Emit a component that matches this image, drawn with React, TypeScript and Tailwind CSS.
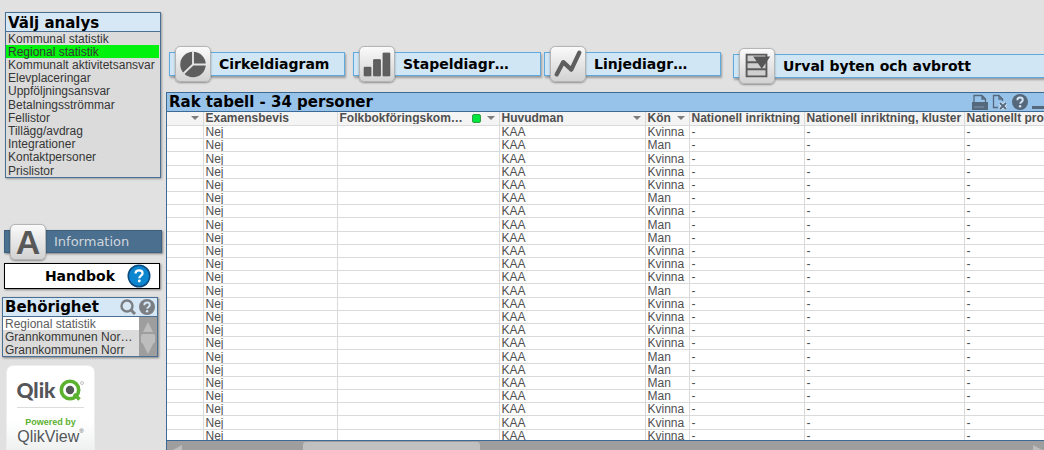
import type { ReactNode } from "react";
import clsx from "clsx";

const analyses = [
  "Kommunal statistik",
  "Regional statistik",
  "Kommunalt aktivitetsansvar",
  "Elevplaceringar",
  "Uppföljningsansvar",
  "Betalningsströmmar",
  "Fellistor",
  "Tillägg/avdrag",
  "Integrationer",
  "Kontaktpersoner",
  "Prislistor",
];

const permissions = ["Regional statistik", "Grannkommunen Nor…", "Grannkommunen Norr"];

const genders = [
  "Kvinna", "Man", "Kvinna", "Kvinna", "Kvinna", "Man", "Kvinna", "Man",
  "Man", "Kvinna", "Kvinna", "Kvinna", "Man", "Kvinna", "Kvinna", "Kvinna",
  "Kvinna", "Man", "Man", "Man", "Man", "Kvinna", "Kvinna", "Kvinna",
];

const columns = [
  { label: "", width: "w-9", sortable: true },
  { label: "Examensbevis", width: "w-[134px]" },
  { label: "Folkbokföringskom…", width: "w-[162px]", sortable: true, selected: true },
  { label: "Huvudman", width: "w-[146px]", sortable: true },
  { label: "Kön", width: "w-[44px]", sortable: true },
  { label: "Nationell inriktning", width: "w-[115px]" },
  { label: "Nationell inriktning, kluster", width: "w-[160px]" },
  { label: "Nationellt program", width: "w-[160px]" },
];

function HelpIcon({ className }: { className?: string }) {
  return (
    <svg viewBox="0 0 16 16" className={className}>
      <circle cx="8" cy="8" r="8" fill="currentColor" />
      <path d="M5.3 6.2C5.3 4.4 6.4 3.5 8 3.5s2.8.9 2.8 2.4c0 2-2.6 2-2.6 3.9" fill="none" stroke="#d6e7f5" strokeWidth="1.9" />
      <circle cx="8.1" cy="12.2" r="1.2" fill="#d6e7f5" />
    </svg>
  );
}

function PieIcon() {
  return (
    <svg viewBox="0 0 36 36" className="size-9">
      <circle cx="18" cy="18.5" r="13.500" fill="#5e5e5e" />
      <path d="M18 4v14.500h14.500M18 18.500 8 28" fill="none" stroke="#e4e4e4" strokeWidth="2" />
    </svg>
  );
}

function BarsIcon() {
  return (
    <svg viewBox="0 0 36 36" className="size-9" fill="#606060" stroke="#4f4f4f">
      <path d="M4.500 21.500h7v9h-7zM14.500 13.500h7v17h-7zM24.500 6.500h7v24h-7z" />
    </svg>
  );
}

function LineIcon() {
  return (
    <svg viewBox="0 0 36 36" className="size-9">
      <path d="M6 29 13 16l8.500 8L30 6" fill="none" stroke="#5e5e5e" strokeWidth="4.500" strokeLinecap="round" strokeLinejoin="round" />
    </svg>
  );
}

function FilterIcon() {
  return (
    <svg viewBox="0 0 36 36" className="size-9">
      <path d="M7 6h21v23H7zM7 14h21M7 21.500h21" fill="#cfcfcf" stroke="#5a5a5a" strokeWidth="2" />
      <path d="M14 8h18l-9 13z" fill="#565656" />
    </svg>
  );
}

function IconTile({ children }: { children: ReactNode }) {
  return (
    <span className="flex size-9 shrink-0 items-center justify-center rounded-[5px] border border-[#b5b5b5] bg-linear-to-b from-[#fafafa] to-[#d2d2d2] shadow-[0_1px_2px_#00000060]">
      {children}
    </span>
  );
}

function ChartButton({ icon, label, className }: { icon: ReactNode; label: string; className: string }) {
  return (
    <button
      className={clsx(
        "flex h-6 shrink-0 items-center gap-2 border border-[#5eaade] bg-[#d0e6f4] pl-[5px] text-left text-[14px] font-bold whitespace-nowrap text-black shadow-[1px_2px_2px_#00000050]",
        className,
      )}
    >
      <IconTile>{icon}</IconTile>
      {label}
    </button>
  );
}

function Sidebar() {
  return (
    <aside className="flex w-[166px] shrink-0 flex-col pt-3">
      <section className="mr-[5px] ml-[5px] border border-[#4a6f93] bg-[#dbdbdb] shadow-[1px_1px_2px_#00000050]">
        <h2 className="h-[19px] border-b border-[#4a6f93] bg-[#d6e7f5] pl-0.5 text-[15px] leading-5 font-bold">Välj analys</h2>
        <ul className="font-['Liberation_Sans',Arial,sans-serif] text-[12px] leading-[13px] text-[#363636]">
          {analyses.map((name) => (
            <li key={name} className="flex h-[13px] items-end pr-px nth-[5n+6]:h-[14px]">
              <button className={clsx("h-[13px] w-full pt-px pl-0.5 text-left whitespace-nowrap", name === "Regional statistik" && "bg-[#00f20d]")}>{name}</button>
            </li>
          ))}
        </ul>
      </section>

      <button className="mt-[52px] mr-1 ml-1 flex h-[23px] items-center gap-2 border border-[#3d6080] bg-[#4a6f8f] pl-[5px] text-[13px] text-[#d0d6dc] shadow-[1px_1px_2px_#00000070]">
        <IconTile>
          <span className="font-['Liberation_Sans',Arial,sans-serif] text-[34px] leading-9 font-bold text-[#585858]">A</span>
        </IconTile>
        Information
      </button>

      <button className="mt-2.5 mr-1.5 ml-1 flex h-7 items-center justify-end gap-3 border border-black bg-white pr-2 text-[14px] font-bold shadow-[1px_1px_2px_#00000070]">
        Handbok
        <svg viewBox="0 0 24 24" className="size-6">
          <circle cx="12" cy="12" r="11.500" fill="#0c4a80" />
          <circle cx="12" cy="12" r="10" fill="#0b86cf" />
          <path d="M8.500 9.500C8.500 7.500 10 6.300 12 6.300s3.600 1.100 3.600 3c0 2.300-3.300 2.400-3.300 4.900" fill="none" stroke="#fff" strokeWidth="2.200" />
          <circle cx="12.300" cy="17" r="1.400" fill="#fff" />
        </svg>
      </button>

      <section className="mt-2 mr-2 ml-0.5 border border-[#4a6f93] bg-[#dbdbdb] shadow-[1px_1px_2px_#00000070]">
        <div className="flex h-[19px] items-center gap-[3px] border-b border-[#4a6f93] bg-[#d6e7f5] pr-0.5 pl-0.5">
          <h2 className="flex-1 text-[15px] leading-5 font-bold">Behörighet</h2>
          <button aria-label="Sök">
            <svg viewBox="0 0 16 16" className="size-4" fill="none" stroke="#7b7f83">
              <circle cx="7" cy="7" r="5.500" strokeWidth="2.400" />
              <path d="m11 11 4 4" strokeWidth="3" />
            </svg>
          </button>
          <button aria-label="Hjälp">
            <HelpIcon className="size-4 text-[#7b7f83]" />
          </button>
        </div>
        <div className="flex">
          <ul className="min-w-0 flex-1 font-['Liberation_Sans',Arial,sans-serif] text-[12px] leading-[13px] text-[#363636]">
            {permissions.map((name) => (
              <li key={name} className="flex h-[13px] whitespace-nowrap first:bg-white first:text-[#5c5c5c]">
                <button className="h-[13px] pt-px pl-0.5">{name}</button>
              </li>
            ))}
          </ul>
          <svg viewBox="0 0 18 39" className="h-[39px] w-[18px] bg-[#9e9e9e]" fill="#bdbdbd">
            <path d="M9 5l5 10H4zM2 19q0-2 2-2h10q2 0 2 2v6l-2 2-5 10-5-10-2-2z" />
          </svg>
        </div>
      </section>

      <div className="mt-2 ml-1.5 flex h-[95px] w-[89px] shrink-0 flex-col items-center rounded-[7px] border border-[#ededed] bg-linear-to-b from-white from-60% to-[#e9ecec] pt-2.5 font-['Liberation_Sans',Arial,sans-serif]">
        <div className="flex h-7 items-center gap-[3px] font-['Lato',sans-serif] text-[21px] font-black text-[#54565a]">
          Qlik
          <svg viewBox="0 0 26 24" className="h-6 w-[26px]">
            <circle cx="11" cy="12" r="8.700" fill="none" stroke="#5bb130" strokeWidth="3.600" />
            <path d="m15 16 5.500 5.500" stroke="#5bb130" strokeWidth="3.600" />
            <circle cx="11" cy="12" r="4.200" fill="#54565a" />
            <circle cx="23" cy="5" r="1.500" fill="none" stroke="#aaa" strokeWidth=".7" />
          </svg>
        </div>
        <div className="mt-[3px] h-px w-[67px] shrink-0 bg-[#dcdcdc]" />
        <span className="mt-2 text-[9px] leading-3 font-bold text-[#5bb130]">Powered by</span>
        <span className="flex text-[16px] leading-[18px] text-[#54565a]">
          QlikView<sup className="text-[6px] leading-3">®</sup>
        </span>
      </div>
    </aside>
  );
}

function PersonTable() {
  return (
    <section className="flex min-h-0 flex-1 flex-col border-t border-l border-[#3d6a94] bg-white">
      <div className="flex h-[19px] shrink-0 items-center gap-1 border-b border-[#3d6a94] bg-[#97c3ea] pl-0.5">
        <h1 className="flex-1 text-[15px] leading-5 font-bold">Rak tabell - 34 personer</h1>
        <button aria-label="Skriv ut">
          <svg viewBox="0 0 16 16" className="size-4" fill="#56697c">
            <path d="M0 8h16v8H0z" />
            <path d="M2 8V1.500h8L13.500 5v3M10 1.500V5h3.500" fill="none" stroke="#56697c" strokeWidth="1.300" />
            <path d="M2 13h10" stroke="#7f97ae" />
          </svg>
        </button>
        <button aria-label="Exportera till Excel">
          <svg viewBox="0 0 16 16" className="size-4" fill="none" stroke="#56697c">
            <path d="M6 13.500H1.500v-12H7L10.500 5v2M7 1.500V5h3.500" strokeWidth="1.300" />
            <path d="m8 9 6 6M14 9l-6 6" stroke="#d6e7f5" strokeWidth="3.500" />
            <path d="m8 9 6 6M14 9l-6 6" strokeWidth="1.800" />
          </svg>
        </button>
        <button aria-label="Hjälp">
          <HelpIcon className="size-4 text-[#56697c]" />
        </button>
        <button aria-label="Minimera" className="flex h-[14px] items-end">
          <span className="h-[3px] w-3 bg-[#56697c]" />
        </button>
      </div>

      <div className="overflow-hidden font-['Liberation_Sans',Arial,sans-serif] text-[12px] leading-3">
        <table className="w-[957px] table-fixed border-collapse">
          <thead>
            <tr className="h-[13px] bg-[#f4f4f4]">
              {columns.map((col) => (
                <th key={col.label} className={clsx("border-r border-b border-[#dadada] p-0 text-left font-bold text-[#4f4f4f]", col.width)}>
                  <div className="flex h-3 items-center gap-1.5 overflow-hidden pr-1 pl-0.5">
                    <span className="flex-1 whitespace-nowrap">{col.label}</span>
                    {col.selected && <span className="size-[9px] rounded-xs border border-[#2f9e45] bg-[#00e63c]" />}
                    {col.sortable && (
                      <svg viewBox="0 0 8 4" className="h-1 w-2 shrink-0" fill="#7d7d7d">
                        <path d="M0 0h8L4 4z" />
                      </svg>
                    )}
                  </div>
                </th>
              ))}
            </tr>
          </thead>
          <tbody className="text-[#505050]">
            {genders.map((gender, index) => (
              <tr key={index} className="h-[13px] nth-[5n+3]:h-[14px]">
                {["", "Nej", "", "KAA", gender, "-", "-", "-"].map((value, i) => (
                  <td key={i} className="border-r border-b border-[#dadada] p-0 align-bottom">
                    <div className="h-3 overflow-hidden pl-0.5 whitespace-nowrap">{value}</div>
                  </td>
                ))}
              </tr>
            ))}
          </tbody>
        </table>
      </div>

      <div className="flex min-h-[10px] flex-1 items-start justify-between border-t border-[#3d6a94] bg-[#9e9e9e]">
        <svg viewBox="0 0 12 12" className="mt-1 ml-1 size-3" fill="#bdbdbd">
          <path d="M0 6 11 0v12z" />
        </svg>
        <div className="mt-px mr-auto ml-[120px] h-4 w-[177px] rounded-[3px] bg-[#c0c0c0]" />
        <svg viewBox="0 0 12 12" className="mt-1 size-3" fill="#bdbdbd">
          <path d="M12 6 1 0v12z" />
        </svg>
      </div>
    </section>
  );
}

export default function App() {
  return (
    <div className="flex h-screen overflow-hidden bg-[#e1e1e1] font-['DejaVu_Sans',Verdana,sans-serif] text-black">
      <Sidebar />
      <main className="flex min-w-0 flex-1 flex-col">
        <nav className="flex h-[92px] shrink-0 items-start overflow-hidden pt-[52px] pl-[3px]">
          <ChartButton icon={<PieIcon />} label="Cirkeldiagram" className="mr-2 w-[176px]" />
          <ChartButton icon={<BarsIcon />} label="Stapeldiagr…" className="mr-[3px] w-[188px]" />
          <ChartButton icon={<LineIcon />} label="Linjediagr…" className="mr-3 w-[177px]" />
          <ChartButton icon={<FilterIcon />} label="Urval byten och avbrott" className="mt-0.5 w-[340px]" />
        </nav>
        <PersonTable />
      </main>
    </div>
  );
}
